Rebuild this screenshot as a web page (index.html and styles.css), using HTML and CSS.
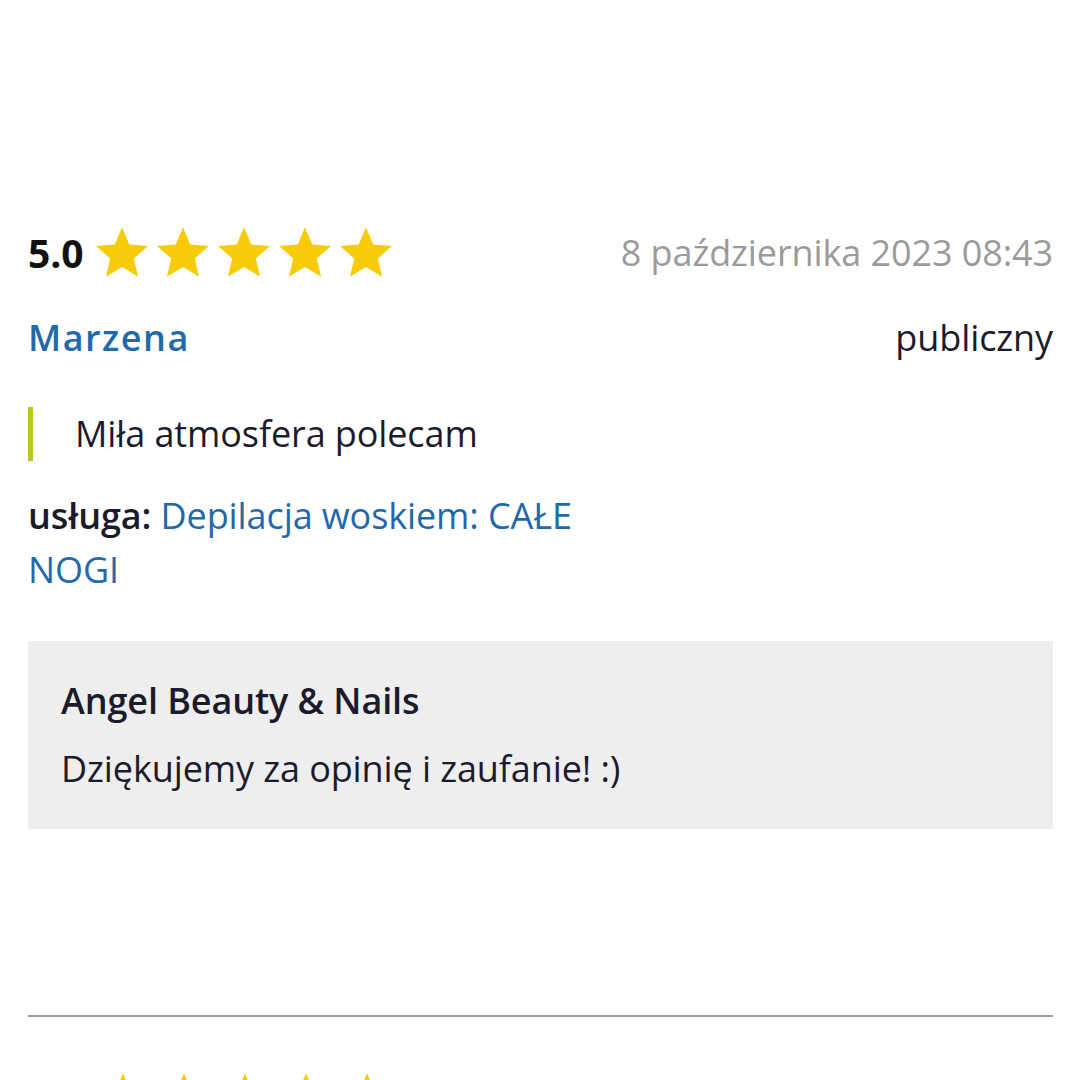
FILE: index.html
```html
<!DOCTYPE html>
<html>

	<head>
		<meta charset="UTF-8">
		<title>Opinie</title>
		<link rel="stylesheet" href="styles.css">
	</head>

	<body>
		<div class="reviews">
			<section class="review">
				<div class="review-top">
					<div class="rating">
						<span class="score">5.0</span>
						<span class="stars">
							<svg viewBox="2 2 20 19"><path d="M12 17.27L18.18 21l-1.64-7.03L22 9.24l-7.19-.61L12 2 9.19 8.63 2 9.24l5.46 4.73L5.82 21z"/></svg>
							<svg viewBox="2 2 20 19"><path d="M12 17.27L18.18 21l-1.64-7.03L22 9.24l-7.19-.61L12 2 9.19 8.63 2 9.24l5.46 4.73L5.82 21z"/></svg>
							<svg viewBox="2 2 20 19"><path d="M12 17.27L18.18 21l-1.64-7.03L22 9.24l-7.19-.61L12 2 9.19 8.63 2 9.24l5.46 4.73L5.82 21z"/></svg>
							<svg viewBox="2 2 20 19"><path d="M12 17.27L18.18 21l-1.64-7.03L22 9.24l-7.19-.61L12 2 9.19 8.63 2 9.24l5.46 4.73L5.82 21z"/></svg>
							<svg viewBox="2 2 20 19"><path d="M12 17.27L18.18 21l-1.64-7.03L22 9.24l-7.19-.61L12 2 9.19 8.63 2 9.24l5.46 4.73L5.82 21z"/></svg>
						</span>
					</div>
					<span class="date">8 października 2023 08:43</span>
				</div>
				<div class="review-author">
					<a class="name">Marzena</a>
					<span class="visibility">publiczny</span>
				</div>
				<blockquote class="review-text">Miła atmosfera polecam</blockquote>
				<div class="service"><b>usługa:</b> <a>Depilacja woskiem: CAŁE NOGI</a></div>
				<div class="reply">
					<div class="reply-name">Angel Beauty &amp; Nails</div>
					<div class="reply-text">Dziękujemy za opinię i zaufanie! :)</div>
				</div>
			</section>

			<section class="review">
				<div class="review-top">
					<div class="rating">
						<span class="stars stars-next">
							<svg viewBox="2 2 20 19"><path d="M12 17.27L18.18 21l-1.64-7.03L22 9.24l-7.19-.61L12 2 9.19 8.63 2 9.24l5.46 4.73L5.82 21z"/></svg>
							<svg viewBox="2 2 20 19"><path d="M12 17.27L18.18 21l-1.64-7.03L22 9.24l-7.19-.61L12 2 9.19 8.63 2 9.24l5.46 4.73L5.82 21z"/></svg>
							<svg viewBox="2 2 20 19"><path d="M12 17.27L18.18 21l-1.64-7.03L22 9.24l-7.19-.61L12 2 9.19 8.63 2 9.24l5.46 4.73L5.82 21z"/></svg>
							<svg viewBox="2 2 20 19"><path d="M12 17.27L18.18 21l-1.64-7.03L22 9.24l-7.19-.61L12 2 9.19 8.63 2 9.24l5.46 4.73L5.82 21z"/></svg>
							<svg viewBox="2 2 20 19"><path d="M12 17.27L18.18 21l-1.64-7.03L22 9.24l-7.19-.61L12 2 9.19 8.63 2 9.24l5.46 4.73L5.82 21z"/></svg>
						</span>
					</div>
				</div>
			</section>
		</div>
	</body>

</html>
```

FILE: styles.css
```css
* {
	margin: 0;
	padding: 0;
	box-sizing: border-box;
}

html,
body {
	height: 100%;
	overflow: hidden;
	background: #ffffff;
}

body {
	font-family: "Open Sans", "Liberation Sans", sans-serif;
	font-size: 36px;
	line-height: 54px;
	letter-spacing: -0.1px;
	color: #1c1b2c;
}

.reviews {
	padding: 226px 27px 0 28px;
}

.review {
	padding-bottom: 186px;
	border-bottom: 2px solid #9e9e9e;
}

.review + .review {
	border-bottom: none;
	padding-top: 58px;
}

.review-top {
	display: flex;
	justify-content: space-between;
	align-items: center;
}

.rating {
	display: flex;
	align-items: center;
}

.score {
	font-size: 39px;
	font-weight: 700;
	color: #111111;
	margin-right: 13px;
}

.stars {
	display: flex;
	gap: 9px;
	margin-top: -2px;
}

.stars svg {
	width: 52px;
	height: 50px;
	fill: #f8cb08;
}

/* next review, only the star tips show */
.stars-next {
	margin-left: 69px;
}

.date {
	color: #9b9b9b;
}

.review-author {
	display: flex;
	justify-content: space-between;
	margin-top: 31px;
}

.name {
	color: #1f69ad;
	font-weight: 600;
	letter-spacing: 1.5px;
}

.review-text {
	margin-top: 42px;
	border-left: 5px solid #b8c826;
	padding-left: 42px;
}

.service {
	margin-top: 28px;
	width: 600px;
}

.service b {
	font-weight: 600;
}

.service a {
	color: #1f69ad;
}

.reply {
	margin-top: 44px;
	background: #eeeeee;
	padding: 33px 33px;
}

.reply-name {
	font-weight: 600;
	margin-bottom: 14px;
}
```
